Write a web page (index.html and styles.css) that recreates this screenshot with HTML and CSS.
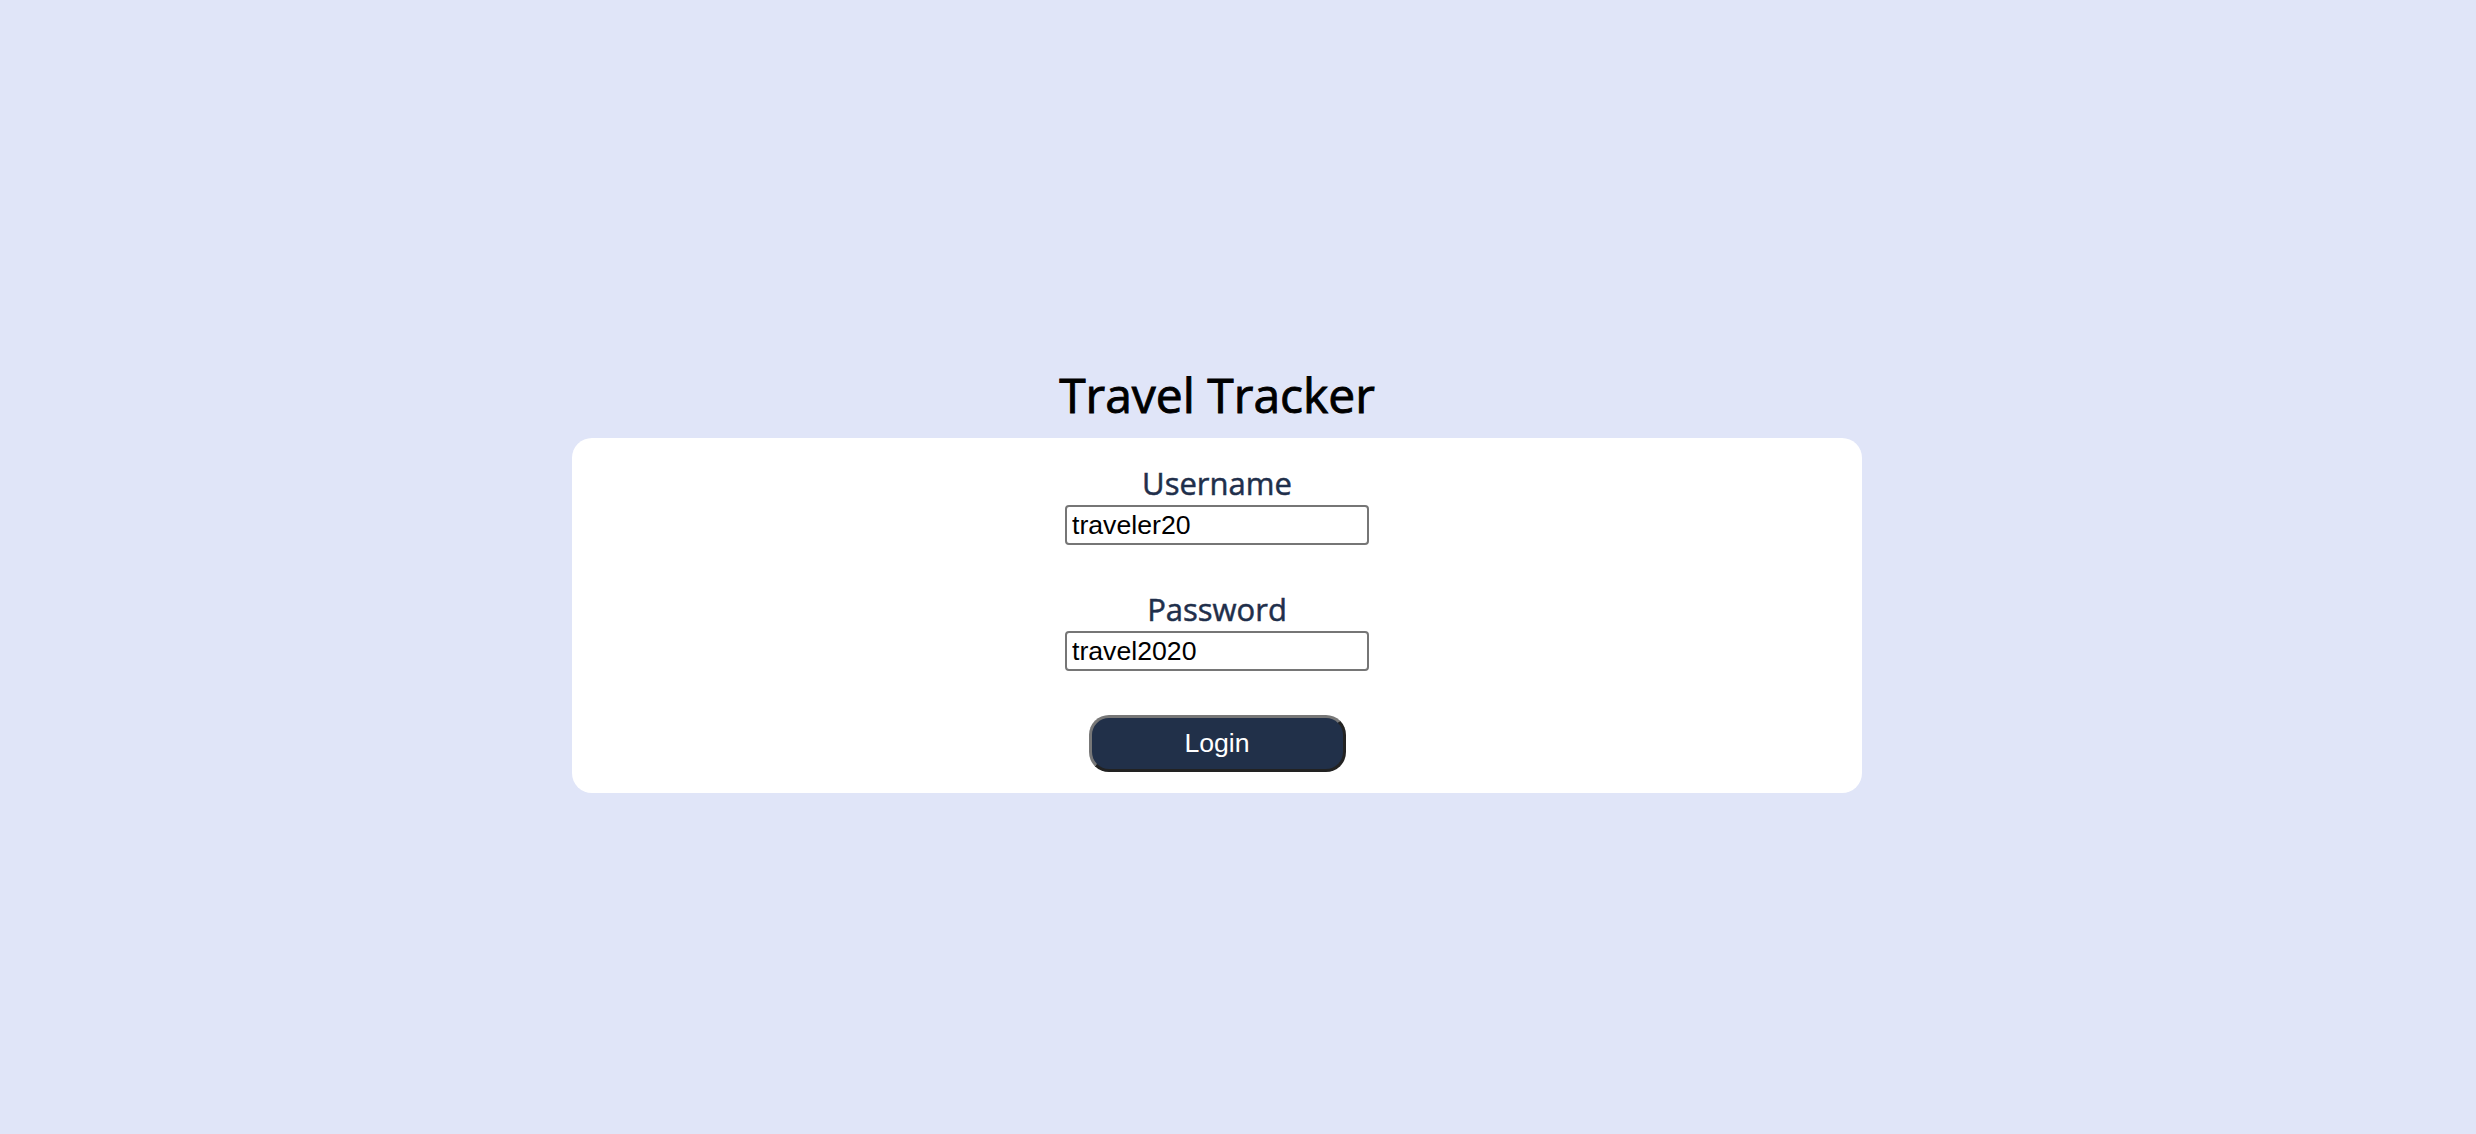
FILE: index.html
```html
<!DOCTYPE html>
<html>
<head>
<meta charset="utf-8">
<title>Travel Tracker</title>
<link rel="stylesheet" href="styles.css">
</head>
<body>
<main class="page">
  <h1 class="title">Travel Tracker</h1>
  <form class="card">
    <label class="label" for="username">Username</label>
    <input class="field" id="username" type="text" value="traveler20">
    <label class="label label-second" for="password">Password</label>
    <input class="field" id="password" type="text" value="travel2020">
    <button class="login" type="button">Login</button>
  </form>
</main>
</body>
</html>
```
FILE: styles.css
```css
html, body {
  margin: 0;
  padding: 0;
  background: #e0e5f8;
  height: 100%;
}
.page {
  display: flex;
  flex-direction: column;
  align-items: center;
  width: 1290px;
  margin-left: 572px;
  padding-top: 355px;
}
.title {
  margin: 0 0 3px;
  font-family: "Open Sans", sans-serif;
  font-weight: 400;
  font-size: 48px;
  line-height: 80px;
  color: #000;
  -webkit-text-stroke: 0.9px #000;
}
.card {
  box-sizing: border-box;
  width: 1290px;
  height: 355px;
  background: #fff;
  border-radius: 20px;
  display: flex;
  flex-direction: column;
  align-items: center;
  padding-top: 24px;
}
.label {
  font-family: "Open Sans", sans-serif;
  font-weight: 400;
  font-size: 31px;
  line-height: 43px;
  color: #1f2f4b;
  -webkit-text-stroke: 0.5px #1f2f4b;
  margin-top: 0;
}
.label-second {
  margin-top: 43px;
}
.field {
  box-sizing: border-box;
  width: 304px;
  height: 40px;
  border: 2px solid #767676;
  border-radius: 4px;
  padding: 0 5px;
  font-family: "Liberation Sans", Arial, sans-serif;
  font-size: 26.67px;
  color: #000;
  background: #fff;
}
.login {
  box-sizing: border-box;
  margin-top: 44px;
  width: 257px;
  height: 57px;
  border-radius: 20px;
  border-style: solid;
  border-width: 3px;
  border-color: #777 #222 #222 #777;
  background: #213049;
  color: #fff;
  font-family: "Liberation Sans", Arial, sans-serif;
  font-size: 26.67px;
  padding: 0;
}
```
